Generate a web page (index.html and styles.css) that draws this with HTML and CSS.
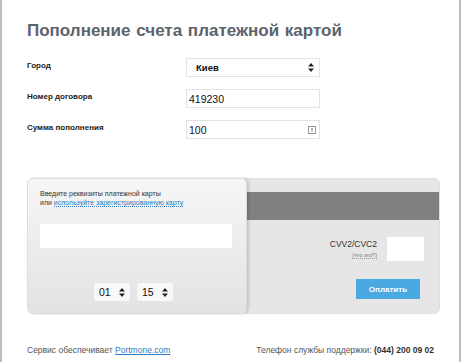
FILE: index.html
```
<!DOCTYPE html>
<html lang="ru">
  <head>
    <meta charset="UTF-8" />
    <meta name="viewport" content="width=device-width, initial-scale=1.0" />
    <title>Пополнение счета платежной картой</title>
    <link rel="stylesheet" href="styles.css">
  </head>
  <body>
    <div class="page">
      <h1>Пополнение счета платежной картой</h1>

      <!-- Account form -->
      <div class="form">
        <div class="row">
          <label>Город</label>
          <div class="field select">
            <span class="city">Киев</span>
            <svg width="6" height="9" viewBox="0 0 6 9"><path d="M3 0 L6 3.5 H0 Z M3 9 L6 5.5 H0 Z" fill="#222"/></svg>
          </div>
        </div>
        <div class="row">
          <label>Номер договора</label>
          <div class="field">419230</div>
        </div>
        <div class="row">
          <label>Сумма пополнения</label>
          <div class="field number">
            <span>100</span>
            <svg width="8" height="8" viewBox="0 0 8 8"><rect x="0.5" y="0.5" width="7" height="7" fill="#fff" stroke="#999"/><path d="M4 2 V4.5 M4 5.5 V6.2" stroke="#777" stroke-width="1.2"/></svg>
          </div>
        </div>
      </div>

      <!-- Payment card -->
      <div class="cards">
        <div class="card-front">
          <p class="hint">Введите реквизиты платежной карты<br>или <a href="#">используйте зарегистрированную карту</a></p>
          <div class="card-number"></div>
          <div class="expiry">
            <div class="mini-select">01 <svg width="6" height="9" viewBox="0 0 6 9"><path d="M3 0 L6 3.5 H0 Z M3 9 L6 5.5 H0 Z" fill="#222"/></svg></div>
            <div class="mini-select">15 <svg width="6" height="9" viewBox="0 0 6 9"><path d="M3 0 L6 3.5 H0 Z M3 9 L6 5.5 H0 Z" fill="#222"/></svg></div>
          </div>
        </div>
        <div class="card-back">
          <div class="stripe"></div>
          <div class="cvv">
            <div class="cvv-label">
              <span>CVV2/CVC2</span>
              <a href="#">(что это?)</a>
            </div>
            <div class="cvv-input"></div>
          </div>
          <button class="pay-btn">Оплатить</button>
        </div>
      </div>

      <footer>
        <p>Сервис обеспечивает <a href="#">Portmone.com</a></p>
        <p>Телефон службы поддержки: <strong>(044) 200 09 02</strong></p>
      </footer>
    </div>
  </body>
</html>
```
FILE: styles.css
```
/* General Styling */
* {
  margin: 0;
  padding: 0;
  box-sizing: border-box;
  font-family: "Liberation Sans", Arial, sans-serif;
}

body {
  background-color: #fff;
}

.page {
  width: 461px;
  height: 362px;
  border-left: 2px solid #bdbdbd;
  border-right: 2px solid #bdbdbd;
  padding: 20px 19px 0 25px;
}

h1 {
  font-size: 17px;
  font-weight: bold;
  color: #5b636b;
  word-spacing: 1px;
  line-height: 21px;
}

/* Form rows */
.form {
  margin-top: 17px;
  display: flex;
  flex-direction: column;
  gap: 12px;
}

.row {
  display: flex;
  align-items: center;
}

.row label {
  width: 159px;
  font-size: 8px;
  font-weight: bold;
  color: #222;
  margin-top: -4px;
}

.field {
  width: 134px;
  height: 19px;
  border: 1px solid #e2e2e2;
  background-color: #fff;
  font-size: 10.5px;
  color: #111;
  padding: 0 6px 0 2px;
  display: flex;
  align-items: center;
  justify-content: space-between;
}

.select {
  padding-left: 9px;
  padding-right: 5px;
}

.city {
  font-weight: bold;
  font-size: 9.5px;
}

.number {
  padding-right: 3px;
}

/* Card block */
.cards {
  margin-top: 39px;
  width: 413px;
  height: 136px;
  display: flex;
}

.card-front {
  position: relative;
  z-index: 1;
  width: 220px;
  border: 1px solid #dcdcdc;
  border-radius: 6px;
  background: linear-gradient(#f6f6f6, #e3e3e3);
  box-shadow: 2px 0 3px rgba(0, 0, 0, 0.15);
  padding: 10px 13px 0 12px;
}

.hint {
  font-size: 7px;
  line-height: 9px;
  color: #333;
}

.hint a {
  color: #2a79c2;
  text-decoration: none;
  border-bottom: 1px dotted #2a79c2;
}

.card-number {
  margin-top: 17px;
  height: 24px;
  width: 192px;
  background-color: #fff;
}

.expiry {
  margin-top: 35px;
  display: flex;
  justify-content: center;
  gap: 7px;
  padding-right: 6px;
}

.mini-select {
  width: 36px;
  height: 18px;
  background-color: #f8f8f8;
  border-radius: 3px;
  font-size: 10.5px;
  color: #111;
  display: flex;
  align-items: center;
  justify-content: space-between;
  padding: 0 5px 0 5px;
}

.card-back {
  flex: 1;
  margin-left: -7px;
  border: 1px solid #e0e0e0;
  border-radius: 6px;
  background-color: #e6e6e6;
  padding-top: 13px;
  display: flex;
  flex-direction: column;
  align-items: flex-end;
}

.stripe {
  width: 100%;
  height: 28px;
  background-color: #808080;
}

.cvv {
  margin-top: 17px;
  display: flex;
  align-items: flex-start;
  gap: 10px;
  padding-right: 15px;
}

.cvv-label {
  display: flex;
  flex-direction: column;
  align-items: flex-end;
  padding-top: 2px;
}

.cvv-label span {
  font-size: 8.5px;
  color: #333;
}

.cvv-label a {
  font-size: 5.5px;
  color: #777;
  text-decoration: none;
  border-bottom: 1px dotted #999;
  margin-top: 3px;
}

.cvv-input {
  width: 37px;
  height: 24px;
  background-color: #fff;
}

.pay-btn {
  margin-top: 18px;
  margin-right: 19px;
  width: 64px;
  height: 20px;
  border: none;
  background-color: #4ba9e1;
  color: #fff;
  font-size: 8px;
  font-weight: bold;
}

footer {
  margin-top: 31px;
  display: flex;
  justify-content: space-between;
  padding-right: 6px;
  font-size: 8.5px;
  color: #555;
}

footer a {
  color: #2a79c2;
}

footer strong {
  color: #333;
}
```
